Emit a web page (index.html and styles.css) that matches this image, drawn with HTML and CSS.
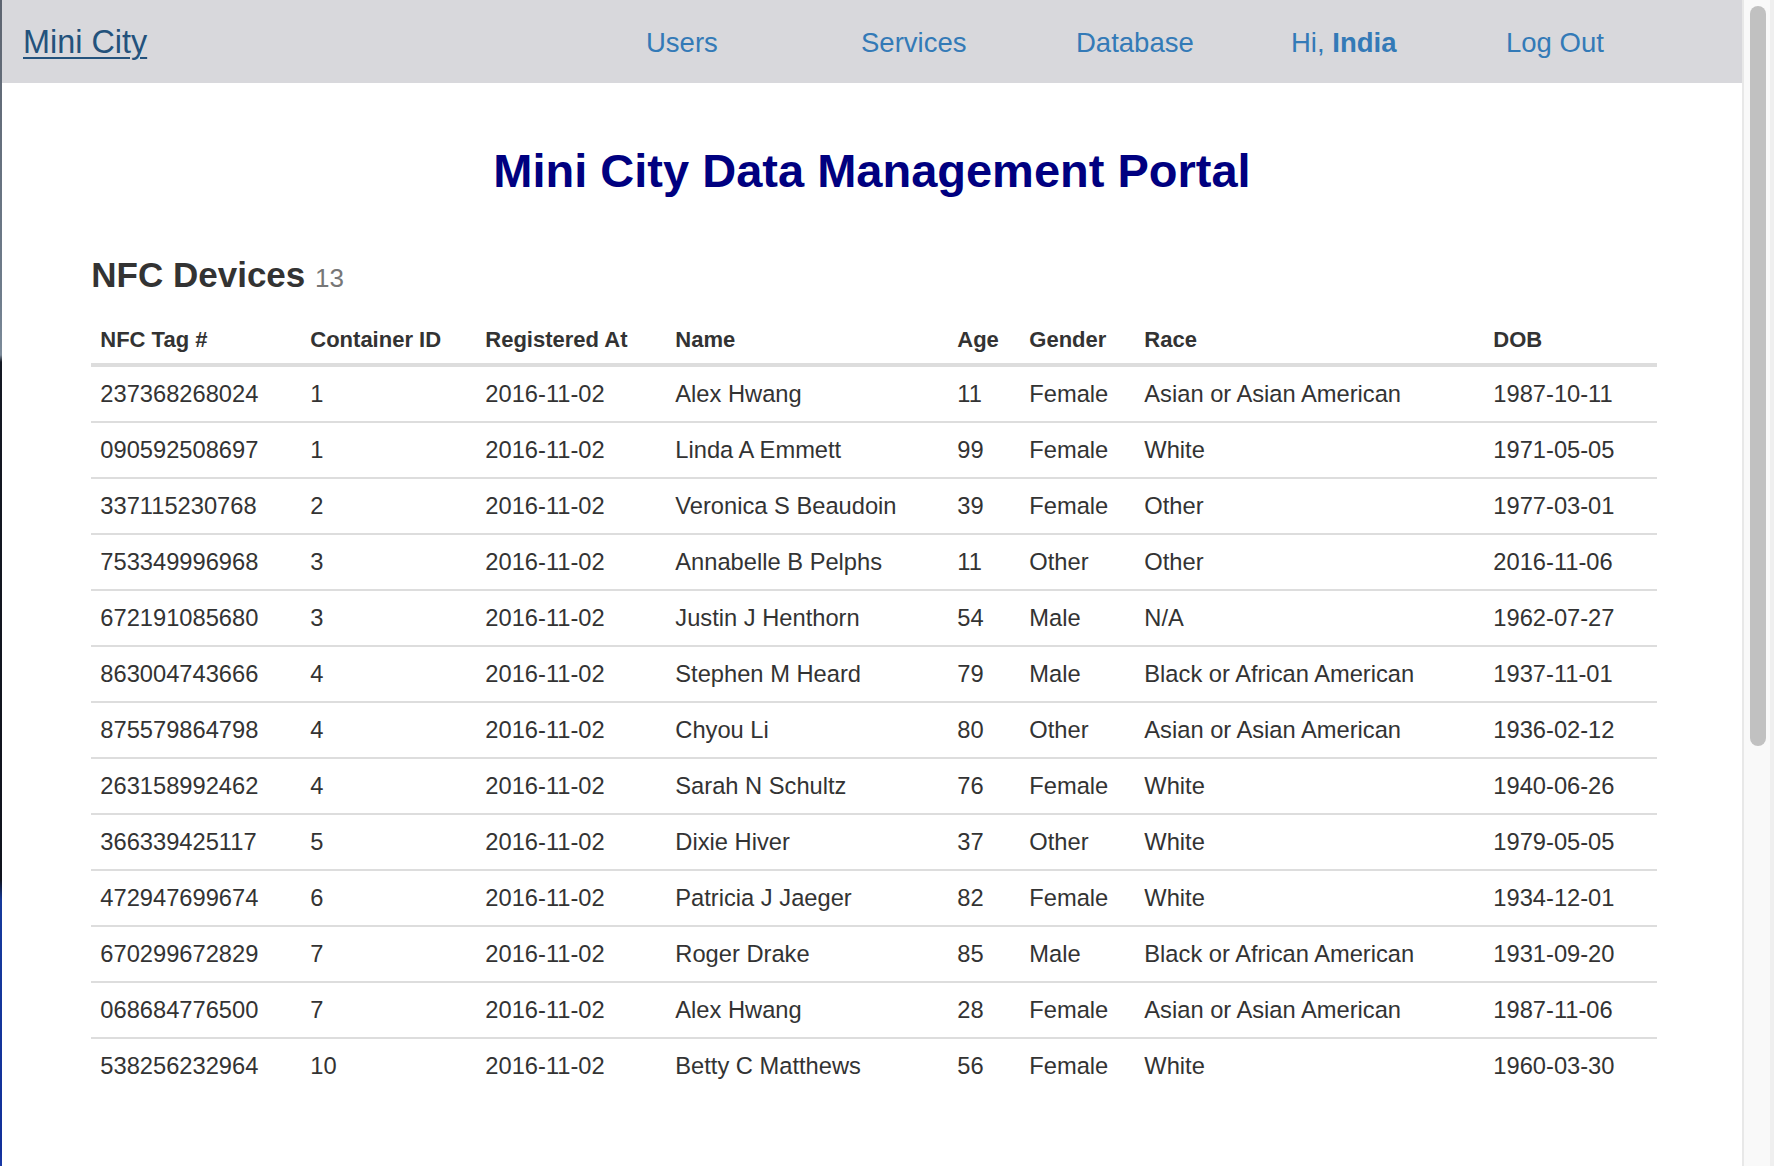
FILE: index.html
```html
<!DOCTYPE html>
<html lang="en">
<head>
<meta charset="utf-8">
<title>Mini City Data Management Portal</title>
<link rel="stylesheet" href="styles.css">
</head>
<body>
<div class="window">
  <div class="desk-edge"></div>
  <div class="viewport">
    <nav class="navbar">
      <a class="brand" href="#">Mini City</a>
      <ul class="nav-links">
        <li><a href="#">Users</a></li>
        <li><a href="#">Services</a></li>
        <li><a href="#">Database</a></li>
        <li><a href="#">Hi, <b>India</b></a></li>
        <li><a href="#">Log Out</a></li>
      </ul>
    </nav>
    <main class="container">
      <h1 class="page-title">Mini City Data Management Portal</h1>
      <h3 class="section-title">NFC Devices <small>13</small></h3>
      <table class="data-table">
        <colgroup>
          <col class="c-tag"><col class="c-cont"><col class="c-reg"><col class="c-name"><col class="c-age"><col class="c-gender"><col class="c-race"><col class="c-dob">
        </colgroup>
        <thead>
          <tr><th>NFC Tag #</th><th>Container ID</th><th>Registered At</th><th>Name</th><th>Age</th><th>Gender</th><th>Race</th><th>DOB</th></tr>
        </thead>
        <tbody>
          <tr><td>237368268024</td><td>1</td><td>2016-11-02</td><td>Alex Hwang</td><td>11</td><td>Female</td><td>Asian or Asian American</td><td>1987-10-11</td></tr>
          <tr><td>090592508697</td><td>1</td><td>2016-11-02</td><td>Linda A Emmett</td><td>99</td><td>Female</td><td>White</td><td>1971-05-05</td></tr>
          <tr><td>337115230768</td><td>2</td><td>2016-11-02</td><td>Veronica S Beaudoin</td><td>39</td><td>Female</td><td>Other</td><td>1977-03-01</td></tr>
          <tr><td>753349996968</td><td>3</td><td>2016-11-02</td><td>Annabelle B Pelphs</td><td>11</td><td>Other</td><td>Other</td><td>2016-11-06</td></tr>
          <tr><td>672191085680</td><td>3</td><td>2016-11-02</td><td>Justin J Henthorn</td><td>54</td><td>Male</td><td>N/A</td><td>1962-07-27</td></tr>
          <tr><td>863004743666</td><td>4</td><td>2016-11-02</td><td>Stephen M Heard</td><td>79</td><td>Male</td><td>Black or African American</td><td>1937-11-01</td></tr>
          <tr><td>875579864798</td><td>4</td><td>2016-11-02</td><td>Chyou Li</td><td>80</td><td>Other</td><td>Asian or Asian American</td><td>1936-02-12</td></tr>
          <tr><td>263158992462</td><td>4</td><td>2016-11-02</td><td>Sarah N Schultz</td><td>76</td><td>Female</td><td>White</td><td>1940-06-26</td></tr>
          <tr><td>366339425117</td><td>5</td><td>2016-11-02</td><td>Dixie Hiver</td><td>37</td><td>Other</td><td>White</td><td>1979-05-05</td></tr>
          <tr><td>472947699674</td><td>6</td><td>2016-11-02</td><td>Patricia J Jaeger</td><td>82</td><td>Female</td><td>White</td><td>1934-12-01</td></tr>
          <tr><td>670299672829</td><td>7</td><td>2016-11-02</td><td>Roger Drake</td><td>85</td><td>Male</td><td>Black or African American</td><td>1931-09-20</td></tr>
          <tr><td>068684776500</td><td>7</td><td>2016-11-02</td><td>Alex Hwang</td><td>28</td><td>Female</td><td>Asian or Asian American</td><td>1987-11-06</td></tr>
          <tr><td>538256232964</td><td>10</td><td>2016-11-02</td><td>Betty C Matthews</td><td>56</td><td>Female</td><td>White</td><td>1960-03-30</td></tr>
        </tbody>
      </table>
    </main>
  </div>
  <div class="scrollbar"><div class="thumb"></div></div>
</div>
</body>
</html>
```

FILE: styles.css
```css
html, body {
  margin: 0;
  padding: 0;
  height: 100%;
  overflow: hidden;
  background: #ffffff;
  font-family: "Liberation Sans", Arial, Helvetica, sans-serif;
  color: #333333;
}

.window {
  display: flex;
  height: 1166px;
  width: 1774px;
}

.desk-edge {
  width: 2px;
  flex: none;
  background: linear-gradient(to bottom,
    #5d6470 0px, #6f7d8c 300px, #7c8b9a 355px,
    #141823 362px, #10131d 880px,
    #163a9c 900px, #12309a 1150px, #1a3aa8 1166px);
}

.viewport {
  width: 1740px;
  flex: none;
  display: flex;
  flex-direction: column;
  background: #ffffff;
}

/* ---------- navbar ---------- */
.navbar {
  height: 83px;
  background: #d8d8dc;
  display: flex;
  align-items: center;
  padding: 2px 21px 0 21px;
  box-sizing: border-box;
}

.brand {
  font-size: 32.4px;
  color: #23527c;
  text-decoration: underline;
  text-decoration-thickness: 2px;
  text-underline-offset: 4px;
  line-height: 1;
}

.nav-links {
  list-style: none;
  margin: 0 0 0 auto;
  padding: 0;
  display: flex;
}

.nav-links li {
  width: 215px;
}

.nav-links a {
  font-size: 27.5px;
  color: #337ab7;
  text-decoration: none;
}

.nav-links b {
  font-weight: bold;
}

/* ---------- content ---------- */
.container {
  display: flex;
  flex-direction: column;
  align-items: center;
}

.page-title {
  margin: 59.7px 0 0 0;
  font-size: 47px;
  line-height: 56px;
  font-weight: bold;
  color: #000080;
  text-align: center;
}

.section-title {
  width: 1566px;
  margin: 55px 0 0 4.6px;
  font-size: 35px;
  line-height: 42px;
  font-weight: bold;
  color: #333333;
}

.section-title small {
  font-size: 26px;
  font-weight: normal;
  color: #777777;
}

.data-table {
  width: 1566px;
  margin: 17px 0 0 4.6px;
  border-collapse: collapse;
  table-layout: fixed;
}

.c-tag { width: 210px; }
.c-cont { width: 175px; }
.c-reg { width: 190px; }
.c-name { width: 282px; }
.c-age { width: 72px; }
.c-gender { width: 115px; }
.c-race { width: 349px; }
.c-dob { width: 173px; }

.data-table th {
  text-align: left;
  font-size: 22px;
  font-weight: bold;
  line-height: 28px;
  padding: 10px 9px 9px 9px;
  border-bottom: 4px solid #dddddd;
  white-space: nowrap;
}

.data-table td {
  font-size: 23.7px;
  line-height: 30px;
  padding: 12px 9px;
  border-top: 2px solid #dddddd;
  white-space: nowrap;
}

.data-table tbody tr:first-child td {
  border-top: none;
}

/* ---------- scrollbar ---------- */
.scrollbar {
  width: 32px;
  flex: none;
  box-sizing: border-box;
  background: #f9f9f9;
  border-left: 2px solid #e8e8e8;
  border-right: 4px solid #efefef;
  padding: 6px 0 0 6px;
}

.thumb {
  width: 16px;
  height: 740px;
  border-radius: 8px;
  background: #c1c1c1;
}
```
